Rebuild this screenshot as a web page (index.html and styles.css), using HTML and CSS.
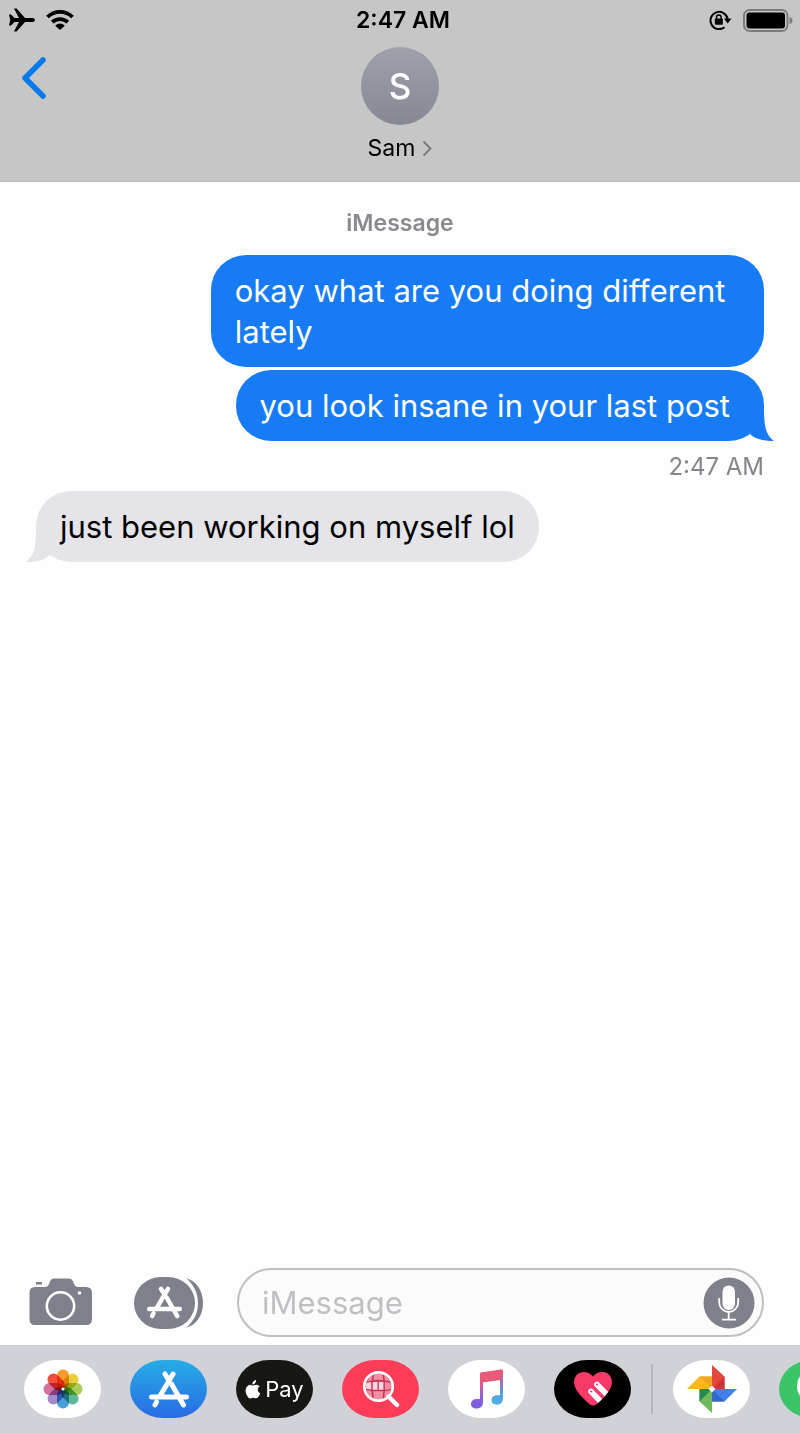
FILE: index.html
```html
<!DOCTYPE html>
<html lang="en">
<head>
<meta charset="utf-8">
<meta name="viewport" content="width=device-width, initial-scale=1">
<title>Messages</title>
<link rel="stylesheet" href="styles.css">
</head>
<body>
<svg class="defs" aria-hidden="true">
  <defs>
    <symbol id="store-mark" viewBox="0 0 42 38">
      <g fill="none" stroke="#fff" stroke-width="5" stroke-linecap="round">
        <path d="M17 4l3 5M25 4L12 26M8.500 32l-1.500 3M23.500 14l12 21M3.500 27H38.500"/>
      </g>
    </symbol>
  </defs>
</svg>
<div class="screen">
  <header class="top">
    <div class="status">
      <div class="status-left">
        <svg width="26" height="24" viewBox="0 0 26 24"><path d="M0 6.500h2l3.500 3.500H10L5 .500h2.600L16 10h7.500c1.200 0 2.500.7 2.500 2s-1.300 2-2.500 2H16L7.600 23.500H5L10 14H5.500L2 17.500H0L1.200 12z"/></svg>
        <svg width="28" height="20" viewBox="0 0 28 20"><g fill="none" stroke="#000" stroke-width="3.800"><path d="M1.500 7a18 18 0 0 1 25 0"/><path d="M6.200 12.200a11.500 11.500 0 0 1 15.600 0"/></g><path d="M14 20l-4.800-4.300a6.500 6.500 0 0 1 9.600 0z"/></svg>
      </div>
      <time class="status-time">2:47 AM</time>
      <div class="status-right">
        <svg width="24" height="20" viewBox="0 0 24 20"><path d="M15.500 17.200A8.600 8.600 0 1 1 18.600 9" fill="none" stroke="#000" stroke-width="2"/><path d="M15 8.500h7.500L18.700 13.500z"/><rect x="5.800" y="8.500" width="8" height="6.200" rx=".8"/><path d="M7.500 9V7.300a2.300 2.300 0 0 1 4.600 0V9" fill="none" stroke="#000" stroke-width="1.500"/></svg>
        <svg width="50" height="23" viewBox="0 0 50 23"><rect x="1" y="1" width="43.500" height="21" rx="5.500" fill="none" stroke="#7d7d7d" stroke-width="2"/><rect x="3.500" y="3.500" width="38.500" height="16" rx="3"/><path d="M46.500 8v7q3-1 3-3.500T46.500 8z" fill="#7d7d7d"/></svg>
      </div>
    </div>
    <div class="contact-row">
      <button class="back" type="button" aria-label="Back">
        <svg width="24" height="42" viewBox="0 0 24 42"><path d="M21 3L3 21l18 18" fill="none" stroke="#0579ee" stroke-width="5.500" stroke-linecap="round" stroke-linejoin="round"/></svg>
      </button>
      <button class="contact" type="button">
        <span class="avatar">S</span>
        <span class="contact-name">Sam
          <svg width="10" height="17" viewBox="0 0 10 17"><path d="M1.500 1.500l7 7-7 7" fill="none" stroke="#7d7d80" stroke-width="2"/></svg>
        </span>
      </button>
    </div>
  </header>

  <main class="thread">
    <p class="service">iMessage</p>
    <p class="bubble sent">okay what are you doing different lately</p>
    <p class="bubble sent">you look insane in your last post
      <svg class="tail tail-right" width="40" height="40" viewBox="0 0 40 40"><path d="M30 4C30 24 31 33 40 40C32 40 22 39 16 33z" fill="#177bf5"/></svg>
    </p>
    <time class="stamp">2:47 AM</time>
    <p class="bubble received">just been working on myself lol
      <svg class="tail tail-left" width="40" height="40" viewBox="0 0 40 40"><path d="M10 4C10 24 9 33 0 40C8 40 18 39 24 33z" fill="#e5e4e9"/></svg>
    </p>
  </main>

  <form class="composer">
    <button class="tool camera" type="button" aria-label="Camera">
      <svg width="64" height="50" viewBox="0 0 64 50"><path d="M6 9h10q2.500 0 3.500-2l2-4.500Q22.500.500 25 .500h15q2.500 0 3.500 2l2 4.500q1 2 3.500 2h8q6 0 6 6v26q0 6-6 6H6q-5.500 0-5.500-6V15Q.500 9 6 9z" fill="#7e818c"/><rect x="7" y="4" width="6" height="2.500" fill="#7e818c"/><circle cx="31.500" cy="28" r="13.700" fill="none" stroke="#fff" stroke-width="2.600"/><circle cx="50.500" cy="15" r="1.800" fill="#fff"/></svg>
    </button>
    <button class="tool apps" type="button" aria-label="Apps">
      <svg width="70" height="52" viewBox="0 0 70 52"><path d="M52 1c10 3 17 12 17 25s-7 22-17 25c7-6 12-14 12-25S59 7 52 1z" fill="#7e818c"/><rect x="0" y="0" width="61" height="52" rx="27" ry="26" fill="#7e818c"/><use href="#store-mark" x="12" y="8" width="37" height="34"/></svg>
    </button>
    <div class="field">
      <input class="field-input" type="text" placeholder="iMessage" aria-label="Message">
      <button class="mic" type="button" aria-label="Record audio">
        <svg width="52" height="52" viewBox="0 0 52 52"><circle cx="26" cy="26" r="25.500" fill="#7e818c"/><rect x="19.500" y="8.500" width="12.500" height="24.500" rx="6.200" fill="#fff"/><path d="M16.200 21v4.500a9.500 9.500 0 0 0 19 0V21M25.700 35v7.500M19 42.600h14" fill="none" stroke="#fff" stroke-width="1.800"/></svg>
      </button>
    </div>
  </form>

  <nav class="apps-strip" aria-label="iMessage apps">
    <button class="app app-white" type="button" aria-label="Photos">
      <svg width="40" height="40" viewBox="-20 -20 40 40"><g class="petals">
        <rect x="-6" y="-19.500" width="12" height="19.500" rx="6" fill="#f79a2c"/>
        <rect x="-6" y="-19.500" width="12" height="19.500" rx="6" fill="#e8cf3a" transform="rotate(45)"/>
        <rect x="-6" y="-19.500" width="12" height="19.500" rx="6" fill="#a9cc58" transform="rotate(90)"/>
        <rect x="-6" y="-19.500" width="12" height="19.500" rx="6" fill="#5db896" transform="rotate(135)"/>
        <rect x="-6" y="-19.500" width="12" height="19.500" rx="6" fill="#4a9fd8" transform="rotate(180)"/>
        <rect x="-6" y="-19.500" width="12" height="19.500" rx="6" fill="#a38bcb" transform="rotate(225)"/>
        <rect x="-6" y="-19.500" width="12" height="19.500" rx="6" fill="#d2709f" transform="rotate(270)"/>
        <rect x="-6" y="-19.500" width="12" height="19.500" rx="6" fill="#f0503a" transform="rotate(315)"/>
      </g><circle r="1.600" fill="#fff"/></svg>
    </button>
    <button class="app app-store" type="button" aria-label="App Store">
      <svg width="42" height="38"><use href="#store-mark" width="42" height="38"/></svg>
    </button>
    <button class="app app-pay" type="button" aria-label="Apple Pay">
      <svg width="16" height="19" viewBox="0 0 16 19"><path d="M11 0q.2 2-1 3.300Q8.800 4.700 7.300 4.600 7.100 2.800 8.300 1.500 9.400.200 11 0zM14.700 6.300q-2 1.200-2 3.400 0 2.500 2.500 3.600-.7 2-1.900 3.600-1 1.400-2.300 1.400-.8 0-1.600-.4-1.300-.5-2.700.1-.7.300-1.300.4-1.300.1-2.500-1.500Q.300 13.700.600 9.900.900 6.500 3.500 5.200 5 4.500 6.600 5.200q1.100.5 2.200 0Q12.500 3.800 14.700 6.300z" fill="#fff"/></svg>
      <span>Pay</span>
    </button>
    <button class="app app-search" type="button" aria-label="Image search">
      <svg width="38" height="38" viewBox="0 0 38 38"><circle cx="16.500" cy="16.500" r="14" fill="#c93455"/><g fill="#f58da3"><path d="M5.500 11.500Q7.500 6.500 10.500 5l-.7 5.500zM12 4.500q4-1.500 8.500-.200l.7 6Q16 9.500 11.500 10.200zM22.300 5q3.500 1.700 5.200 6l-4.700-.6zM22.800 12l5.700.8q.8 3 .2 6.200l-5.700.9zM4.700 20l4.600.9.900 6.500Q6.500 25.500 4.700 20zM11 21.200h10.300l-.8 7.200q-4.500 1.200-8.500 0zM22.800 21.300l5.400-1q-1.500 5-6 7.200z"/></g><path d="M4.500 13l4.700-.9v7.500l-5-.8q-.5-3 .3-5.800zM10.700 12l4.800-.2v8l-4.800-.100zM16.800 11.800l4.600.2v7.700h-4.600z" fill="#ffd5e2"/><circle cx="16.500" cy="16.500" r="14.200" fill="none" stroke="#fff" stroke-width="2.800"/><path d="M26.500 26.500L35 35" stroke="#fff" stroke-width="4.400" stroke-linecap="round"/></svg>
    </button>
    <button class="app app-white" type="button" aria-label="Music">
      <svg width="34" height="40" viewBox="0 0 34 40"><defs><linearGradient id="note" x1="0" y1="0" x2="0" y2="1"><stop offset="0" stop-color="#f4556e"/><stop offset=".35" stop-color="#d95b95"/><stop offset=".7" stop-color="#8a60dc"/><stop offset="1" stop-color="#745fe0"/></linearGradient><linearGradient id="note-blue" x1="0" y1="0" x2="0" y2="1"><stop offset="0" stop-color="#ef5671"/><stop offset=".35" stop-color="#9a72b5"/><stop offset=".7" stop-color="#4aa5de"/><stop offset="1" stop-color="#50b3e8"/></linearGradient></defs><path d="M10 5q0-1.500 1.500-1.700L14 3v8.500l-1 .5v21.500c0 3.500-2.500 6-6.500 6-3.300 0-5.500-1.700-5.500-4.500 0-3.200 2.600-5 6-5H10z" fill="url(#note)"/><path d="M31.500.500Q33 .200 33 1.700V29c0 4.300-2.400 6.700-6 6.700-3.300 0-5.500-1.500-5.500-4.400 0-3.200 2.600-5.100 6-5.100H30V9l-4 .7V1.200z" fill="url(#note-blue)"/><path d="M12 3.200L31 .6V11L12 13.500z" fill="#e75a78"/></svg>
    </button>
    <button class="app app-black" type="button" aria-label="Digital Touch">
      <svg width="40" height="36" viewBox="0 0 40 36"><defs><clipPath id="heart"><path d="M20 34.500Q17 34.500 12 29 1 19 1 11.500C1 5.500 5 1 10.500 1 15 1 18 3 20 5.500 22 3 25 1 29.500 1 35 1 39 5.500 39 11.500c0 7-9 16-15 21.500q-2.200 1.500-4 1.500z"/></clipPath></defs><g clip-path="url(#heart)"><path d="M0 0h40v36H0z" fill="#f73a67"/><path d="M18 20.500L32 35M24 13.500L38 28" stroke="#fff" stroke-width="5.600" stroke-linecap="round"/><g fill="#d8476f"><circle cx="18" cy="20.500" r="1.100"/><circle cx="24" cy="13.500" r="1.100"/></g></g></svg>
    </button>
    <span class="divider"></span>
    <button class="app app-white" type="button" aria-label="Google Photos">
      <svg width="50" height="48" viewBox="0 0 50 48"><path d="M25 0l12.500 11.500V24H25z" fill="#e4473b"/><path d="M25 24V24L37.500 11.500V24z" fill="#c9353a"/><path d="M50 24L37.500 36.500H25V24z" fill="#437fe8"/><path d="M25 24L37.500 36.500H25z" fill="#3568ca"/><path d="M25 48L12.500 36.500V24H25z" fill="#70b95a"/><path d="M25 24L12.500 36.500V24z" fill="#26874f"/><path d="M0 24l12.500-12.500H25V24z" fill="#fcb91b"/><path d="M12.500 11.500H25V24z" fill="#efa522"/><path d="M25 20.500l3.500 3.500-3.500 3.500-3.500-3.500z" fill="#fff"/></svg>
    </button>
    <button class="app app-green" type="button" aria-label="Phone messages">
      <svg width="42" height="36" viewBox="0 0 42 36"><rect width="42" height="30" rx="14" fill="#fff"/></svg>
    </button>
  </nav>
</div>
</body>
</html>
```
FILE: styles.css
```css
* { box-sizing: border-box; }

body {
  margin: 0;
  font-family: Inter, "Liberation Sans", sans-serif;
  color: #000;
  background: #fefefe;
}

button {
  padding: 0;
  border: 0;
  background: none;
  font: inherit;
  color: inherit;
  cursor: pointer;
}

p { margin: 0; }
svg { display: block; flex: none; }
.defs { position: absolute; width: 0; height: 0; }

.screen {
  display: flex;
  flex-direction: column;
  min-height: 100vh;
  overflow: hidden;
}

.top {
  background: #c6c6c6;
  border-bottom: 1px solid #b9b9b9;
  padding-bottom: 17px;
}

.status {
  display: grid;
  grid-template-columns: 1fr auto 1fr;
  align-items: center;
  height: 40px;
  padding: 0 7px 0 9px;
}
.status-left { display: flex; align-items: center; gap: 11px; }
.status-time { font-size: 23px; font-weight: 600; padding-left: 4px; }
.status-right { display: flex; align-items: center; justify-content: flex-end; gap: 10px; }

.contact-row {
  display: grid;
  grid-template-columns: 1fr auto 1fr;
  align-items: start;
  padding: 7px 22px 0;
}
.back { justify-self: start; padding-top: 10px; }
.contact { display: flex; flex-direction: column; align-items: center; gap: 8px; }
.avatar {
  display: grid;
  place-items: center;
  width: 78px;
  height: 78px;
  border-radius: 50%;
  background: linear-gradient(#9fa1ad, #858793);
  color: #fff;
  font-size: 35px;
  font-weight: 500;
}
.contact-name {
  display: flex;
  align-items: center;
  gap: 7px;
  font-size: 23px;
  line-height: 31px;
}

.thread {
  flex: 1;
  display: flex;
  flex-direction: column;
  padding: 26px 36px;
}
.service {
  align-self: center;
  margin-bottom: 17px;
  font-size: 23px;
  line-height: 30px;
  font-weight: 600;
  color: #8a8a8e;
}
.bubble {
  position: relative;
  max-width: 76%;
  padding: 15px 24px;
  border-radius: 35px;
  font-size: 31px;
  line-height: 41px;
}
.sent {
  align-self: flex-end;
  margin-bottom: 3px;
  padding-right: 34px;
  background: #177bf5;
  color: #fff;
}
.received { align-self: flex-start; background: #e5e4e9; }
.tail { position: absolute; bottom: 0; }
.tail-right { right: -10px; }
.tail-left { left: -10px; }
.stamp {
  align-self: flex-end;
  margin: 8px 0 9px;
  font-size: 24px;
  line-height: 30px;
  color: #86868a;
}

.composer {
  display: flex;
  align-items: center;
  padding: 0 36px 8px 29px;
}
.camera { margin-right: 41px; }
.apps { margin-right: 33px; }
.field {
  flex: 1;
  min-width: 0;
  display: flex;
  align-items: center;
  height: 69px;
  padding: 0 7px 0 23px;
  border: 2px solid #bfbfc1;
  border-radius: 35px;
  background: #fbfbfb;
}
.field-input {
  flex: 1;
  min-width: 0;
  padding: 0;
  border: 0;
  outline: 0;
  background: none;
  font: inherit;
  font-size: 31px;
  line-height: 40px;
}
.field-input::placeholder { color: #c0c0c4; opacity: 1; }

.apps-strip {
  display: flex;
  align-items: center;
  gap: 29px;
  height: 88px;
  padding-left: 24px;
  background: #d0d2d7;
}
.app {
  flex: none;
  display: flex;
  align-items: center;
  justify-content: center;
  width: 77px;
  height: 58px;
  border-radius: 33px / 29px;
}
.app-white { background: #fff; }
.app-store { background: linear-gradient(#27ace5, #286be5); }
.app-pay { gap: 4px; background: #171814; color: #fff; font-size: 22px; }
.app-search { background: #fd3c58; }
.app-black { background: #000; }
.app-green { background: #3ac569; }
.petals { isolation: isolate; }
.petals rect { mix-blend-mode: multiply; }
.divider { flex: none; width: 2px; height: 50px; margin: 0 -9px; background: #b6b7bc; }
```
